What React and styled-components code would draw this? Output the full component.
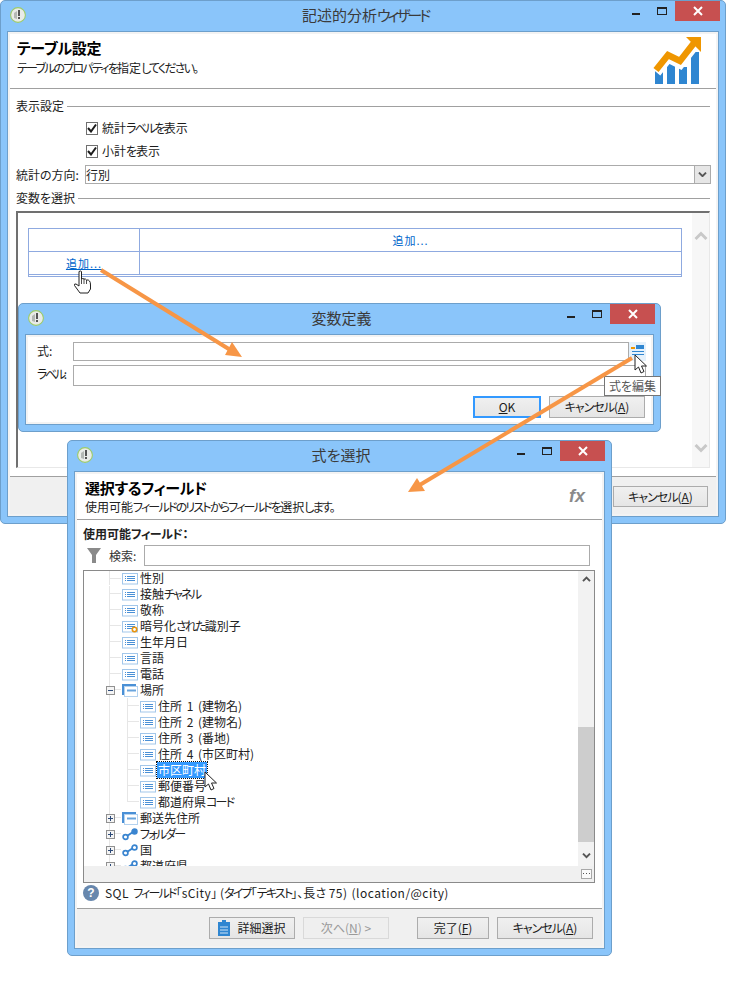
import styled, { createGlobalStyle } from "styled-components";

const GlobalStyle = createGlobalStyle`
    html, body {
        margin: 0;
        padding: 0;
        background: #fff;
    }

    body {
        font-family: "Noto Sans CJK JP", "Liberation Sans", sans-serif;
        font-size: 12px;
        line-height: 16px;
        color: #1c1c1c;
        font-feature-settings: "palt";
    }

    * {
        box-sizing: border-box;
    }
`;

const Desktop = styled.div`
    position: relative;
    width: 756px;
    height: 994px;
    overflow: hidden;
`;

// kana are set much tighter than kanji in the system UI font
const Kana = styled.span`
    letter-spacing: ${p => p.$s ?? -1.8}px;
`;

const Latin = styled.span`
    letter-spacing: 0.45px;
    word-spacing: 1px;
`;

const Window = styled.div`
    position: absolute;
    left: ${p => p.$x}px;
    top: ${p => p.$y}px;
    width: ${p => p.$w}px;
    height: ${p => p.$h}px;
    display: flex;
    flex-direction: column;
    background: #8ac5fa;
    border: 1px solid #6d9fcb;
    border-radius: 5px;
`;

const TitleBar = styled.div`
    flex: none;
    height: 30px;
    display: grid;
    grid-template-columns: 1fr auto 1fr;
    padding: 0 ${p => p.$right}px 0 9px;
`;

const AppIcon = styled.svg`
    width: 16px;
    height: 16px;
    margin-top: 6px;
`;

const Title = styled.div`
    font-size: 15px;
    line-height: 20px;
    padding-top: 4px;
    color: #3a3a3a;
    white-space: nowrap;
`;

const Controls = styled.div`
    display: flex;
    justify-content: flex-end;
    align-items: flex-start;
`;

const Control = styled.div`
    width: 26px;
    height: 20px;
    display: flex;
    align-items: center;
    justify-content: center;
`;

const MinGlyph = styled.span`
    width: 8px;
    height: 2px;
    margin-top: 5px;
    background: #222;
`;

const MaxGlyph = styled.span`
    width: 10px;
    height: 8px;
    border: 1px solid #222;
    border-top-width: 2px;
`;

const CloseButton = styled.div`
    width: 45px;
    height: 20px;
    background: #c75050;
    display: flex;
    align-items: center;
    justify-content: center;
`;

const Frame = styled.div`
    flex: 1;
    min-height: 0;
    margin: 0 6px 6px;
    border: 1px solid #6d9fcb;
    background: #fff;
    display: flex;
    flex-direction: column;
`;

const FrameInner = styled.div`
    flex: 1;
    min-height: 0;
    border: 2px solid #f3f3f3;
    display: flex;
    flex-direction: column;
`;

const Header = styled.div`
    flex: none;
    height: ${p => p.$h}px;
    border-bottom: 1px solid #a0a0a0;
    display: flex;
    justify-content: space-between;
    padding: 5px ${p => p.$right}px 0 ${p => p.$left}px;
`;

const HeaderTitle = styled.div`
    font-size: 15px;
    line-height: 18px;
    font-weight: 700;
    letter-spacing: -0.3px;
    color: #000;
`;

const HeaderSub = styled.div`
    line-height: 16px;
    margin-top: ${p => p.$gap}px;
    color: #222;
    white-space: nowrap;
`;

const Logo = styled.svg`
    width: 48px;
    height: 47px;
    margin-top: -2px;
`;

const FxMark = styled.div`
    font-family: "Liberation Sans", sans-serif;
    font-size: 18px;
    line-height: 20px;
    font-weight: 700;
    font-style: italic;
    color: #8a8a8a;
    margin-top: 7px;
`;

const Content = styled.div`
    flex: none;
    padding: 9px 6px 0;
`;

const Section = styled.div`
    display: flex;
    align-items: center;
    gap: 3px;
    height: 16px;
    margin-top: ${p => p.$top || 0}px;
    white-space: nowrap;

    &::after {
        content: "";
        flex: 1;
        height: 1px;
        background: #a0a0a0;
    }
`;

const CheckRow = styled.div`
    display: flex;
    align-items: center;
    gap: 4px;
    height: 16px;
    padding-left: 70px;
    margin-top: ${p => p.$top}px;
`;

const CheckBox = styled.span`
    width: 12px;
    height: 13px;
    border: 1px solid #707070;
    background: #fff;
    display: flex;
    align-items: center;
    justify-content: center;
`;

const DirectionRow = styled.div`
    display: flex;
    align-items: center;
    margin: 6px -1px 0 0;
`;

const DirectionLabel = styled.div`
    flex: none;
    width: 69px;
    white-space: nowrap;
`;

const Select = styled.div`
    flex: 1;
    height: 19px;
    border: 1px solid #ababab;
    display: flex;
    align-items: center;
    justify-content: space-between;
    line-height: 16px;
`;

const SelectButton = styled.div`
    width: 16px;
    height: 17px;
    border-left: 1px solid #ababab;
    background: #e6e6e6;
    display: flex;
    align-items: center;
    justify-content: center;
`;

const Panel = styled.div`
    height: 257px;
    margin-top: 5px;
    border-left: 2px solid #707070;
    border-top: 2px solid #707070;
    border-right: 1px solid #e8e8e8;
    border-bottom: 1px solid #e8e8e8;
    display: flex;
    justify-content: space-between;
`;

const VarTable = styled.div`
    width: 654px;
    height: 49px;
    margin: 15px 0 0 10px;
    border: 1px solid #8faae0;
    border-bottom: 3px double #8faae0;
`;

const VarRow = styled.div`
    display: flex;
    height: ${p => (p.$first ? 22 : 23)}px;
    border-top: ${p => (p.$first ? "none" : "1px solid #8faae0")};
`;

const VarCell = styled.div`
    width: ${p => (p.$wide ? "auto" : "110px")};
    flex: ${p => (p.$wide ? 1 : "none")};
    border-left: ${p => (p.$wide ? "1px solid #8faae0" : "none")};
    display: flex;
    align-items: center;
    justify-content: center;
`;

const AddLink = styled.span`
    color: #0066cc;
    font-size: 11px;
    letter-spacing: 1px;
    text-decoration: ${p => (p.$underline ? "underline" : "none")};
`;

const PanelScroll = styled.div`
    width: 17px;
    background: #f7f7f7;
    display: flex;
    flex-direction: column;
    align-items: center;
    justify-content: space-between;
    padding: 18px 0 14px;
`;

const Footer = styled.div`
    flex: 1;
    margin-top: ${p => p.$top || 0}px;
    border-top: 1px solid #a0a0a0;
    background: #f0f0f0;
    display: flex;
    justify-content: flex-end;
    gap: 8px;
    padding: ${p => p.$pad};
`;

const Button = styled.div`
    width: ${p => p.$w}px;
    height: ${p => p.$h || 22}px;
    margin-left: ${p => p.$gap || 0}px;
    border: 1px solid ${p => (p.$focus ? "#3399ff" : p.$off ? "#d9d9d9" : "#acacac")};
    outline: ${p => (p.$focus ? "1px solid #3399ff" : "none")};
    outline-offset: -2px;
    background: ${p => (p.$off ? "#efefef" : "linear-gradient(#f0f0f0, #e5e5e5)")};
    color: ${p => (p.$off ? "#9a9a9a" : "#1c1c1c")};
    display: flex;
    align-items: center;
    justify-content: center;
    gap: 7px;
    white-space: nowrap;
`;

const VarForm = styled.div`
    flex: 1;
    padding: 5px 5px 0 7px;
    display: flex;
    flex-direction: column;
    gap: 4px;
`;

const FormRow = styled.div`
    display: flex;
    align-items: flex-start;
`;

const FormLabel = styled.div`
    flex: none;
    width: 38px;
    padding: 1px 0 0 2px;
    white-space: nowrap;
`;

const Input = styled.div`
    flex: 1;
    height: ${p => p.$h}px;
    border: 1px solid #ababab;
`;

const EditButton = styled.div`
    flex: none;
    width: 17px;
    height: 19px;
    background: #e5f1fb;
    display: flex;
    justify-content: center;
    padding-top: 3px;
`;

const FormButtons = styled.div`
    display: flex;
    justify-content: flex-end;
    gap: 8px;
    margin: 6px 1px 0 0;
`;

const Tooltip = styled.div`
    position: absolute;
    left: 604px;
    top: 376px;
    width: 57px;
    height: 20px;
    border: 1px solid #767676;
    background: #fff;
    color: #575757;
    display: flex;
    align-items: center;
    justify-content: center;
    white-space: nowrap;
`;

const FieldPane = styled.div`
    flex: none;
    padding: 6px 7px 0 6px;
`;

const BoldLabel = styled.div`
    font-weight: 700;
    line-height: 16px;
    color: #222;
`;

const SearchRow = styled.div`
    display: flex;
    align-items: center;
    margin: 3px 5px 0 0;
`;

const FilterIcon = styled.svg`
    flex: none;
    width: 14px;
    height: 15px;
    margin: 0 8px 0 4px;
`;

const SearchLabel = styled.div`
    flex: none;
    width: 35px;
    color: #333;
`;

const Tree = styled.div`
    height: 313px;
    margin-top: 4px;
    border: 1px solid #8a8a8a;
    display: grid;
    grid-template-columns: 1fr 16px;
    grid-template-rows: 1fr 16px;
`;

const TreeRows = styled.div`
    overflow: hidden;
`;

const guides = {
    top: "linear-gradient(#e6e6e6,#e6e6e6) 25px 0/1px 100% no-repeat, linear-gradient(#e6e6e6,#e6e6e6) 25px 7px/12px 1px no-repeat",
    child: "linear-gradient(#e6e6e6,#e6e6e6) 25px 0/1px 100% no-repeat, linear-gradient(#e6e6e6,#e6e6e6) 43px 0/1px 100% no-repeat, linear-gradient(#e6e6e6,#e6e6e6) 43px 7px/12px 1px no-repeat",
    last: "linear-gradient(#e6e6e6,#e6e6e6) 25px 0/1px 100% no-repeat, linear-gradient(#e6e6e6,#e6e6e6) 43px 0/1px 8px no-repeat, linear-gradient(#e6e6e6,#e6e6e6) 43px 7px/12px 1px no-repeat",
};

// the list is scrolled, so its first row is one pixel shorter
const TreeRow = styled.div`
    display: flex;
    align-items: center;
    height: ${p => (p.$first ? 14 : 16)}px;
    line-height: ${p => (p.$first ? 14 : 16)}px;
    margin-bottom: ${p => (p.$first ? 1 : 0)}px;
    padding-left: ${p => p.$indent}px;
    background: ${p => guides[p.$guide]};
    white-space: nowrap;
    color: #222;
`;

const Expander = styled.span`
    position: relative;
    flex: none;
    width: 9px;
    height: 9px;
    margin-right: 7px;
    border: 1px solid #919191;
    background: #f4f4f4;

    &::before {
        content: "";
        position: absolute;
        left: 1px;
        top: 3px;
        width: 5px;
        height: 1px;
        background: #2c4a78;
    }

    &::after {
        content: "";
        position: absolute;
        left: 3px;
        top: 1px;
        width: 1px;
        height: 5px;
        background: ${p => (p.$open ? "transparent" : "#2c4a78")};
    }
`;

const RowIcon = styled.svg`
    flex: none;
    width: 16px;
    height: 13px;
    margin-right: 2px;
`;

const RowText = styled.span`
    padding: 0 ${p => (p.$selected ? "1px" : "0")};
    margin-left: ${p => (p.$selected ? "-1px" : "0")};
    background: ${p => (p.$selected ? "#3399ff" : "transparent")};
    color: ${p => (p.$selected ? "#fff" : "inherit")};
    outline: ${p => (p.$selected ? "1px dotted #111" : "none")};
    word-spacing: 2px;
`;

const VScroll = styled.div`
    grid-row: 1;
    grid-column: 2;
    background: #f2f2f2;
    display: flex;
    flex-direction: column;
    align-items: center;
    padding-top: 5px;
`;

const VThumb = styled.div`
    width: 100%;
    height: 115px;
    margin: 145px 0 11px;
    background: #cdcdcd;
`;

const HScroll = styled.div`
    grid-row: 2;
    grid-column: 1;
    background: #f0f0f0;
`;

const Corner = styled.div`
    grid-row: 2;
    grid-column: 2;
    background: #f0f0f0;
    display: flex;
    align-items: center;
    justify-content: center;
`;

const Status = styled.div`
    display: flex;
    align-items: center;
    gap: 6px;
    height: 16px;
    margin: 2px 0 7px;
    white-space: nowrap;
`;

const HelpBadge = styled.span`
    flex: none;
    width: 16px;
    height: 16px;
    border-radius: 50%;
    background: #6787ad;
    color: #fff;
    font-family: "Liberation Sans", sans-serif;
    font-weight: 700;
    font-size: 12px;
    line-height: 16px;
    text-align: center;
`;

const Overlay = styled.svg`
    position: absolute;
    left: 0;
    top: 0;
    width: 756px;
    height: 994px;
    pointer-events: none;
`;

const Cursor = styled.svg`
    position: absolute;
    left: ${p => p.$x}px;
    top: ${p => p.$y}px;
    width: ${p => p.$w}px;
    height: ${p => p.$h}px;
`;

const AppGlyph = () => (
    <AppIcon viewBox="0 0 16 16">
        <circle cx="8" cy="8" r="7.4" fill="#e9ebe8" stroke="#9ccb6a" strokeWidth="1.1" />
        <path d="M4 6 L7 4 L7 12 L4 11 Z" fill="#b4b8b4" />
        <path d="M8 3 H10 V9 H8 Z M8 10 H10 V12 H8 Z" fill="#555" />
    </AppIcon>
);

const WindowTitleBar = ({ right = 5, children }) => (
    <TitleBar $right={right}>
        <AppGlyph />
        <Title>{children}</Title>
        <Controls>
            <Control><MinGlyph /></Control>
            <Control><MaxGlyph /></Control>
            <CloseButton>
                <svg width="10" height="10" viewBox="0 0 10 10">
                    <path d="M1 1 L9 9 M9 1 L1 9" stroke="#fff" strokeWidth="2" />
                </svg>
            </CloseButton>
        </Controls>
    </TitleBar>
);

const Check = () => (
    <CheckBox>
        <svg width="10" height="10" viewBox="0 0 10 10">
            <path d="M1 5 L4 8.5 L9 1.5" fill="none" stroke="#1c1c1c" strokeWidth="2" />
        </svg>
    </CheckBox>
);

const Chevron = ({ up, color = "#c8c8c8", size = 14 }) => (
    <svg width={size} height={size * 0.64} viewBox="0 0 14 9">
        <path
            d={up ? "M1.5 8 L7 2.5 L12.5 8" : "M1.5 1 L7 6.5 L12.5 1"}
            fill="none"
            stroke={color}
            strokeWidth="3"
        />
    </svg>
);

const FieldIcon = ({ gear }) => (
    <RowIcon viewBox="0 0 16 13">
        <rect x="0.5" y="1.5" width="15" height="10.5" fill="#fff" stroke="#a3c7ea" />
        <path d="M3 4.5 H4 M3 6.5 H4 M3 8.5 H4" stroke="#4a90d6" />
        <path d="M5 4.5 H13 M5 6.5 H13 M5 8.5 H13" stroke="#4a90d6" />
        {gear && <circle cx="12.5" cy="9.5" r="2.2" fill="#fff" stroke="#e8930c" strokeWidth="1.6" />}
    </RowIcon>
);

const GroupIcon = () => (
    <RowIcon viewBox="0 0 16 13">
        <path d="M0 0 H14 V2 H2 V11 H0 Z" fill="#4a90d6" />
        <rect x="2.5" y="2.5" width="13" height="10" fill="#fff" stroke="#b4d2ef" />
        <path d="M5 6.5 H14" stroke="#6aa5dd" strokeWidth="2" />
    </RowIcon>
);

const LinkIcon = ({ filled }) => (
    <RowIcon viewBox="0 0 16 13">
        <path d="M5 8 L11 4" stroke="#3a85d0" strokeWidth="2" />
        <circle cx="3.5" cy="9" r="2.4" fill="#fff" stroke="#3a85d0" strokeWidth="1.7" />
        <circle cx="12.5" cy="3.5" r="2.4" fill={filled ? "#3a85d0" : "#fff"} stroke="#3a85d0" strokeWidth="1.7" />
    </RowIcon>
);

const Row = ({ first, indent = 38, guide = "top", expander, open, icon, selected, children }) => (
    <TreeRow $first={first} $indent={expander ? 22 : indent} $guide={guide}>
        {expander && <Expander $open={open} />}
        {icon}
        <RowText $selected={selected}>{children}</RowText>
    </TreeRow>
);

const Cancel = () => (
    <span><Kana $s={-1}>キャンセル</Kana>(<u>A</u>)</span>
);

const App = () => (
    <Desktop>
        <GlobalStyle />

        <Window $x={0} $y={0} $w={726} $h={524}>
            <WindowTitleBar>記述的分析<Kana $s={-3}>ウィザード</Kana></WindowTitleBar>
            <Frame>
                <FrameInner>
                    <Header $h={55} $left={7} $right={15}>
                        <div>
                            <HeaderTitle>テーブル設定</HeaderTitle>
                            <HeaderSub $gap={3}><Kana>テーブルのプロパティを</Kana>指定<Kana>してください。</Kana></HeaderSub>
                        </div>
                        <Logo viewBox="0 0 48 47">
                            <path d="M2 34 H10 V47 H2 Z M14 26 H22 V47 H14 Z M26 30 H34 V47 H26 Z M38 15 H46 V47 H38 Z" fill="#2f86d1" />
                            <path d="M3 35 L15 20 L27 26 L41 8" fill="none" stroke="#fff" strokeWidth="11" />
                            <path d="M3 33 L15 18 L27 24 L41 6" fill="none" stroke="#ef9600" strokeWidth="6.5" />
                            <path d="M33 0 H48 V15 Z" fill="#ef9600" />
                        </Logo>
                    </Header>
                    <Content>
                        <Section>表示設定</Section>
                        <CheckRow $top={6}><Check /><span>統計<Kana>ラベルを</Kana>表示</span></CheckRow>
                        <CheckRow $top={7}><Check /><span>小計<Kana $s={-1}>を</Kana>表示</span></CheckRow>
                        <DirectionRow>
                            <DirectionLabel>統計の方向:</DirectionLabel>
                            <Select>
                                行別
                                <SelectButton><Chevron color="#555" size={9} /></SelectButton>
                            </Select>
                        </DirectionRow>
                        <Section $top={6}>変数を選択</Section>
                        <Panel>
                            <VarTable>
                                <VarRow $first>
                                    <VarCell />
                                    <VarCell $wide><AddLink>追加...</AddLink></VarCell>
                                </VarRow>
                                <VarRow>
                                    <VarCell><AddLink $underline>追加...</AddLink></VarCell>
                                    <VarCell $wide />
                                </VarRow>
                            </VarTable>
                            <PanelScroll>
                                <Chevron up />
                                <Chevron />
                            </PanelScroll>
                        </Panel>
                    </Content>
                    <Footer $top={8} $pad="9px 8px 0 0">
                        <Button $w={95} $h={21}><Cancel /></Button>
                    </Footer>
                </FrameInner>
            </Frame>
        </Window>

        <Window $x={18} $y={303} $w={643} $h={129}>
            <WindowTitleBar>変数定義</WindowTitleBar>
            <Frame>
                <FrameInner>
                    <VarForm>
                        <FormRow>
                            <FormLabel>式:</FormLabel>
                            <Input $h={19} />
                            <EditButton>
                                <svg width="13" height="12" viewBox="0 0 13 12">
                                    <path d="M0 2 H4 V4 H0 Z" fill="#ef9600" />
                                    <path d="M5 0 H13 V4 H5 Z M1 6 H13 V7 H1 Z M1 9 H13 V10 H1 Z" fill="#2f86d1" />
                                </svg>
                            </EditButton>
                        </FormRow>
                        <FormRow>
                            <FormLabel><Kana $s={-2.4}>ラベル</Kana>:</FormLabel>
                            <Input $h={21} />
                        </FormRow>
                        <FormButtons>
                            <Button $w={68} $focus>
                                <span><u>O</u>K</span>
                            </Button>
                            <Button $w={96}><Cancel /></Button>
                        </FormButtons>
                    </VarForm>
                </FrameInner>
            </Frame>
        </Window>
        <Tooltip>式を編集</Tooltip>

        <Window $x={67} $y={440} $w={545} $h={516}>
            <WindowTitleBar right={6}>式を選択</WindowTitleBar>
            <Frame>
                <FrameInner>
                    <Header $h={46} $left={8} $right={17}>
                        <div>
                            <HeaderTitle>選択するフィールド</HeaderTitle>
                            <HeaderSub $gap={2}>使用可能<Kana>フィールドのリストからフィールドを</Kana>選択<Kana>します。</Kana></HeaderSub>
                        </div>
                        <FxMark>fx</FxMark>
                    </Header>
                    <FieldPane>
                        <BoldLabel>使用可能<Kana $s={-0.5}>フィールド</Kana>：</BoldLabel>
                        <SearchRow>
                            <FilterIcon viewBox="0 0 14 15">
                                <path d="M0 0 H14 L9 7 V15 H5 V7 Z" fill="#8a8a8a" />
                            </FilterIcon>
                            <SearchLabel>検索:</SearchLabel>
                            <Input $h={21} />
                        </SearchRow>
                        <Tree>
                            <TreeRows>
                                <Row first icon={<FieldIcon />}>性別</Row>
                                <Row icon={<FieldIcon />}>接触<Kana>チャネル</Kana></Row>
                                <Row icon={<FieldIcon />}>敬称</Row>
                                <Row icon={<FieldIcon gear />}>暗号化<Kana>された</Kana>識別子</Row>
                                <Row icon={<FieldIcon />}>生年月日</Row>
                                <Row icon={<FieldIcon />}>言語</Row>
                                <Row icon={<FieldIcon />}>電話</Row>
                                <Row expander open icon={<GroupIcon />}>場所</Row>
                                <Row indent={56} guide="child" icon={<FieldIcon />}>住所 1 (建物名)</Row>
                                <Row indent={56} guide="child" icon={<FieldIcon />}>住所 2 (建物名)</Row>
                                <Row indent={56} guide="child" icon={<FieldIcon />}>住所 3 (番地)</Row>
                                <Row indent={56} guide="child" icon={<FieldIcon />}>住所 4 (市区町村)</Row>
                                <Row indent={56} guide="child" selected icon={<FieldIcon />}>市区町村</Row>
                                <Row indent={56} guide="child" icon={<FieldIcon />}>郵便番号</Row>
                                <Row indent={56} guide="last" icon={<FieldIcon />}>都道府県<Kana>コード</Kana></Row>
                                <Row expander icon={<GroupIcon />}>郵送先住所</Row>
                                <Row expander icon={<LinkIcon filled />}><Kana>フォルダー</Kana></Row>
                                <Row expander icon={<LinkIcon />}>国</Row>
                                <Row expander icon={<LinkIcon />}>都道府県</Row>
                            </TreeRows>
                            <VScroll>
                                <Chevron up color="#555" size={9} />
                                <VThumb />
                                <Chevron color="#555" size={9} />
                            </VScroll>
                            <HScroll />
                            <Corner>
                                <svg width="11" height="10" viewBox="0 0 11 10">
                                    <rect x="0.5" y="0.5" width="10" height="9" fill="#fafafa" stroke="#a8a8a8" />
                                    <path d="M2 4 H3 V5 H2 Z M5 4 H6 V5 H5 Z M8 4 H9 V5 H8 Z" fill="#555" />
                                </svg>
                            </Corner>
                        </Tree>
                        <Status>
                            <HelpBadge>?</HelpBadge>
                            <span>
                                <Latin>SQL </Latin><Kana>フィールド</Kana>「<Latin>sCity</Latin>」 (<Kana>タイプ</Kana>「<Kana>テキスト</Kana>」、長さ <Latin>75) (location/@city)</Latin>
                            </span>
                        </Status>
                    </FieldPane>
                    <Footer $pad="8px 9px 0 0">
                        <Button $w={86}>
                            <svg width="12" height="16" viewBox="0 0 12 16">
                                <path d="M0 2 H4 V0 H8 V2 H12 V16 H0 Z" fill="#2f86d1" />
                                <path d="M2 7 H10 M2 10 H10 M2 13 H10" stroke="#cfe4f7" />
                            </svg>
                            詳細選択
                        </Button>
                        <Button $w={86} $off><span>次へ(<u>N</u>) &gt;</span></Button>
                        <Button $w={72} $gap={20}><span>完了(<u>F</u>)</span></Button>
                        <Button $w={96}><Cancel /></Button>
                    </Footer>
                </FrameInner>
            </Frame>
        </Window>

        <Overlay viewBox="0 0 756 994">
            <path d="M101 270 L232 351" stroke="#f79646" strokeWidth="4" />
            <path d="M242 357 L225 355 L232 342 Z" fill="#f79646" />
            <path d="M632 358 L418 486" stroke="#f79646" strokeWidth="4" />
            <path d="M408 492 L417 478 L425 491 Z" fill="#f79646" />
        </Overlay>

        <Cursor $x={73} $y={270} $w={19} $h={24} viewBox="0 0 19 24">
            <path
                d="M6 1.5 Q7.5 0.5 8.5 1.5 V9 Q10 8 11 9 Q12.5 8.5 13.5 10 Q15.5 9.5 16.5 11 Q17.5 12 17.5 15 V19 L15 23 H7 L1.5 15.5 Q1 13.5 3 14 L6 16 Z"
                fill="#fff"
                stroke="#222"
                strokeWidth="1"
            />
            <path d="M8.5 9 V14 M11 9 V14 M13.5 10 V14" stroke="#222" strokeWidth="0.8" />
        </Cursor>
        <Cursor $x={634} $y={354} $w={14} $h={20} viewBox="0 0 14 20">
            <path d="M1 1 L1 16 L4.5 13 L7 19 L10 17.5 L7.5 12 L12.5 12 Z" fill="#fff" stroke="#222" strokeWidth="1" />
        </Cursor>
        <Cursor $x={204} $y={771} $w={14} $h={20} viewBox="0 0 14 20">
            <path d="M1 1 L1 16 L4.5 13 L7 19 L10 17.5 L7.5 12 L12.5 12 Z" fill="#fff" stroke="#222" strokeWidth="1" />
        </Cursor>
    </Desktop>
);

export default App;
